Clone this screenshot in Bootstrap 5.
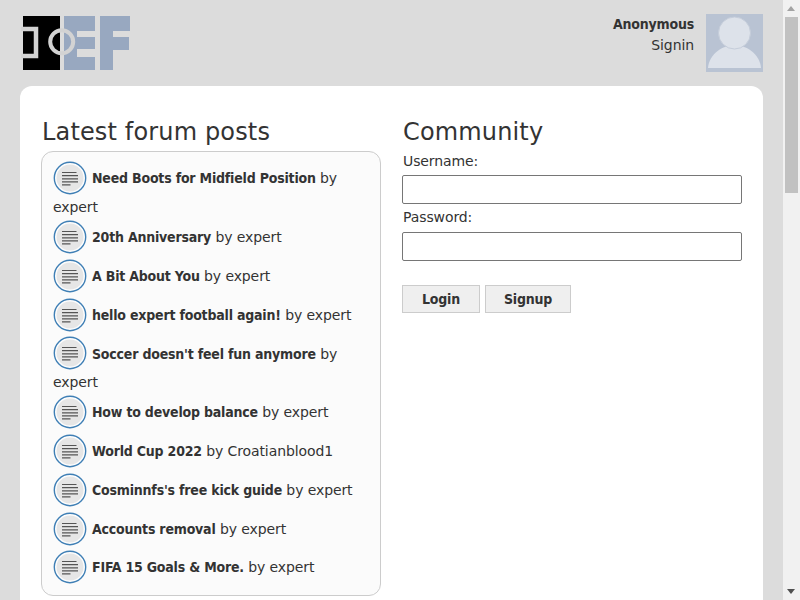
<!DOCTYPE html>
<html lang="en"><head><meta charset="utf-8"><title>Forum</title>
<link href="https://cdn.jsdelivr.net/npm/bootstrap@5.3.0/dist/css/bootstrap.min.css" rel="stylesheet">
<style>
body{background:#dcdcdc;font-family:"DejaVu Sans",sans-serif;font-size:14px;color:#333;letter-spacing:-.1px}
b,.user-name,.plain-btn{font-family:"DejaVu Sans Condensed","DejaVu Sans",sans-serif;font-weight:700;letter-spacing:-.2px}
.site-wrap{padding:0 20px;margin-right:17px}
.site-head{height:86px}
.site-logo{margin:14px 0 0 1px}
.user-box{padding-top:14px;gap:12px}
.user-name{line-height:20px}
.user-link{line-height:20px;margin-top:1px}
.avatar{width:57px;height:58px;display:block}
.main-panel{background:#fff;border-radius:12px 12px 0 0;padding:29px 21px 0;min-height:540px;gap:21px}
.panel-col{flex:0 0 340px}
.sec-title{font-size:24px;font-weight:400;line-height:34px;margin:0 0 2px;padding-left:1px;letter-spacing:.15px}
.post-box{background:#fbfbfb;border:1px solid #ccc;border-radius:12px;padding:6.400px 11px 10px 11px;height:445px}
.post-line{line-height:20px}
.post-ico{width:34px;height:34px;vertical-align:-14px;margin:2.400px 5px 2.400px 0;position:relative;top:.5px}
.field-label{display:block;line-height:20px;margin:0 0 4px;padding-left:1px}
.field-label-alt{margin-bottom:5px}
.field-input{display:block;width:100%;height:29px;border:1px solid #767676;border-radius:2px;background:#fff;margin-bottom:3px}
.form-btns{margin-top:24px;gap:5px}
.plain-btn{height:28px;border:1px solid #ccc;background:#efefef;font-size:14px;color:#333;padding:0;width:78px}
.plain-btn-wide{width:86px}
.fake-bar{position:fixed;top:0;right:0;bottom:0;width:17px;background:#f1f1f1}
.fake-thumb{position:absolute;top:17px;left:2px;width:13px;height:176px;background:#c1c1c1}
.fake-up,.fake-down{position:absolute;left:4px;width:0;height:0;border-left:4.500px solid transparent;border-right:4.500px solid transparent}
.fake-up{top:6px;border-bottom:5px solid #a3a3a3}
.fake-down{bottom:6px;border-top:5px solid #505050}
</style></head><body>
<div class="site-wrap">
<header class="site-head d-flex justify-content-between">
<svg class="site-logo" width="110" height="58" viewBox="0 0 110 58" role="img" aria-label="IOEF logo">
<rect x="2" y="2" width="37" height="54" fill="#000"/>
<path d="M43 2H74V17H56V23H74V35H56V43H74V56H43Z" fill="#98a8c0"/>
<path d="M79 2H109V17H92V23H108V36H92V56H79Z" fill="#98a8c0"/>
<path d="M0 15H15V42H0" fill="none" stroke="#d3d3d3" stroke-width="4.500"/>
<circle cx="40.700" cy="27.700" r="11.500" fill="none" stroke="#d3d3d3" stroke-width="4"/>
</svg>
<div class="user-box d-flex">
<div class="text-end"><div class="user-name">Anonymous</div><div class="user-link">Signin</div></div>
<svg class="avatar" viewBox="0 0 57 58" role="img" aria-label="avatar"><rect width="57" height="58" fill="#b9c3d3"/><path d="M2 54C3 40 17 31 28.500 31S54 40 55 54Z" fill="#dde2ea"/><circle cx="28.500" cy="19" r="16" fill="#dde2ea" stroke="#c5cdda"/></svg>
</div>
</header>
<main class="main-panel d-flex">
<section class="panel-col">
<h2 class="sec-title">Latest forum posts</h2>
<div class="post-box" id="posts"></div>
</section>
<section class="panel-col">
<h2 class="sec-title">Community</h2>
<form>
<label class="field-label">Username:</label><input class="field-input" type="text">
<label class="field-label field-label-alt">Password:</label><input class="field-input" type="password">
<div class="form-btns d-flex"><button type="button" class="plain-btn">Login</button><button type="button" class="plain-btn plain-btn-wide">Signup</button></div>
</form>
</section>
</main>
</div>
<div class="fake-bar" aria-hidden="true"><div class="fake-up"></div><div class="fake-thumb"></div><div class="fake-down"></div></div>
<script>
var ico='<svg class="post-ico" viewBox="0 0 34 34" aria-hidden="true"><circle cx="17" cy="17" r="15.700" fill="#fdfdfd" stroke="#3f7fb5" stroke-width="1.400"/><circle cx="17" cy="17" r="13.500" fill="#e6e6e6"/><path d="M9 11.500H23.500M9 14.700H25M9 17.800H25M9 20.800H25M9 23.800H17.500" stroke="#555" stroke-width="1.200"/></svg>';
var p=[["Need Boots for Midfield Position","expert"],["20th Anniversary","expert"],["A Bit About You","expert"],["hello expert football again!","expert"],["Soccer doesn't feel fun anymore","expert"],["How to develop balance","expert"],["World Cup 2022","Croatianblood1"],["Cosminnfs's free kick guide","expert"],["Accounts removal","expert"],["FIFA 15 Goals &amp; More.","expert"]];
document.getElementById('posts').innerHTML=p.map(function(x){return '<div class="post-line">'+ico+'<b>'+x[0]+'</b> by '+x[1]+'</div>'}).join('');
</script>
<script src="https://cdn.jsdelivr.net/npm/bootstrap@5.3.0/dist/js/bootstrap.bundle.min.js"></script>
</body></html>
